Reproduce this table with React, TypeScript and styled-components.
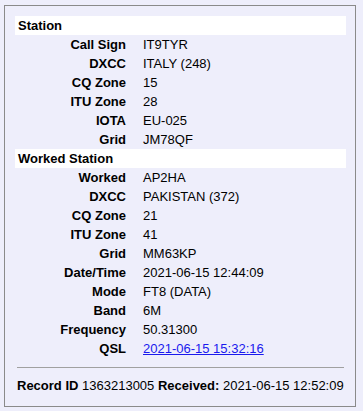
import React from "react";
import styled, { createGlobalStyle } from "styled-components";

const Global = createGlobalStyle`
  html, body {
    margin: 0;
    padding: 0;
    background: #eeeefb;
  }
  body {
    font-family: "Liberation Sans", Arial, sans-serif;
    font-size: 13px;
    color: #000;
  }
`;

const Panel = styled.div`
  box-sizing: border-box;
  width: 352px;
  height: 402px;
  margin: 5px 0 0 4px;
  border: 1px solid #8a8a8a;
  padding: 10px 9px 0 10px;
  background: #eeeefb;
`;

const SectionHead = styled.div`
  height: 19px;
  line-height: 19px;
  background: #ffffff;
  padding-left: 3px;
  font-weight: bold;
`;

const Row = styled.div`
  display: grid;
  grid-template-columns: 111px 1fr;
  column-gap: 17px;
  height: 19px;
  line-height: 19px;
`;

const Label = styled.div`
  text-align: right;
  font-weight: bold;
`;

const Value = styled.div`
  white-space: nowrap;
`;

const Link = styled.a`
  color: #1a1aee;
  text-decoration: underline;
`;

const Rule = styled.div`
  margin: 9px 2px 0 2px;
  height: 0;
  border-top: 1px solid #a0a0a0;
`;

const Footer = styled.div`
  margin-top: 10px;
  padding-left: 2px;
  line-height: 15px;
  white-space: nowrap;
`;

type Field = { label: string; value: string; link?: boolean };

const station: Field[] = [
  { label: "Call Sign", value: "IT9TYR" },
  { label: "DXCC", value: "ITALY (248)" },
  { label: "CQ Zone", value: "15" },
  { label: "ITU Zone", value: "28" },
  { label: "IOTA", value: "EU-025" },
  { label: "Grid", value: "JM78QF" },
];

const worked: Field[] = [
  { label: "Worked", value: "AP2HA" },
  { label: "DXCC", value: "PAKISTAN (372)" },
  { label: "CQ Zone", value: "21" },
  { label: "ITU Zone", value: "41" },
  { label: "Grid", value: "MM63KP" },
  { label: "Date/Time", value: "2021-06-15 12:44:09" },
  { label: "Mode", value: "FT8 (DATA)" },
  { label: "Band", value: "6M" },
  { label: "Frequency", value: "50.31300" },
  { label: "QSL", value: "2021-06-15 15:32:16", link: true },
];

const Fields = ({ items }: { items: Field[] }) => (
  <>
    {items.map((f) => (
      <Row key={f.label}>
        <Label>{f.label}</Label>
        <Value>{f.link ? <Link href="#">{f.value}</Link> : f.value}</Value>
      </Row>
    ))}
  </>
);

export default function App() {
  return (
    <>
      <Global />
      <Panel>
        <SectionHead>Station</SectionHead>
        <Fields items={station} />
        <SectionHead>Worked Station</SectionHead>
        <Fields items={worked} />
        <Rule />
        <Footer>
          <b>Record ID</b> 1363213005 <b>Received:</b> 2021-06-15 12:52:09
        </Footer>
      </Panel>
    </>
  );
}
